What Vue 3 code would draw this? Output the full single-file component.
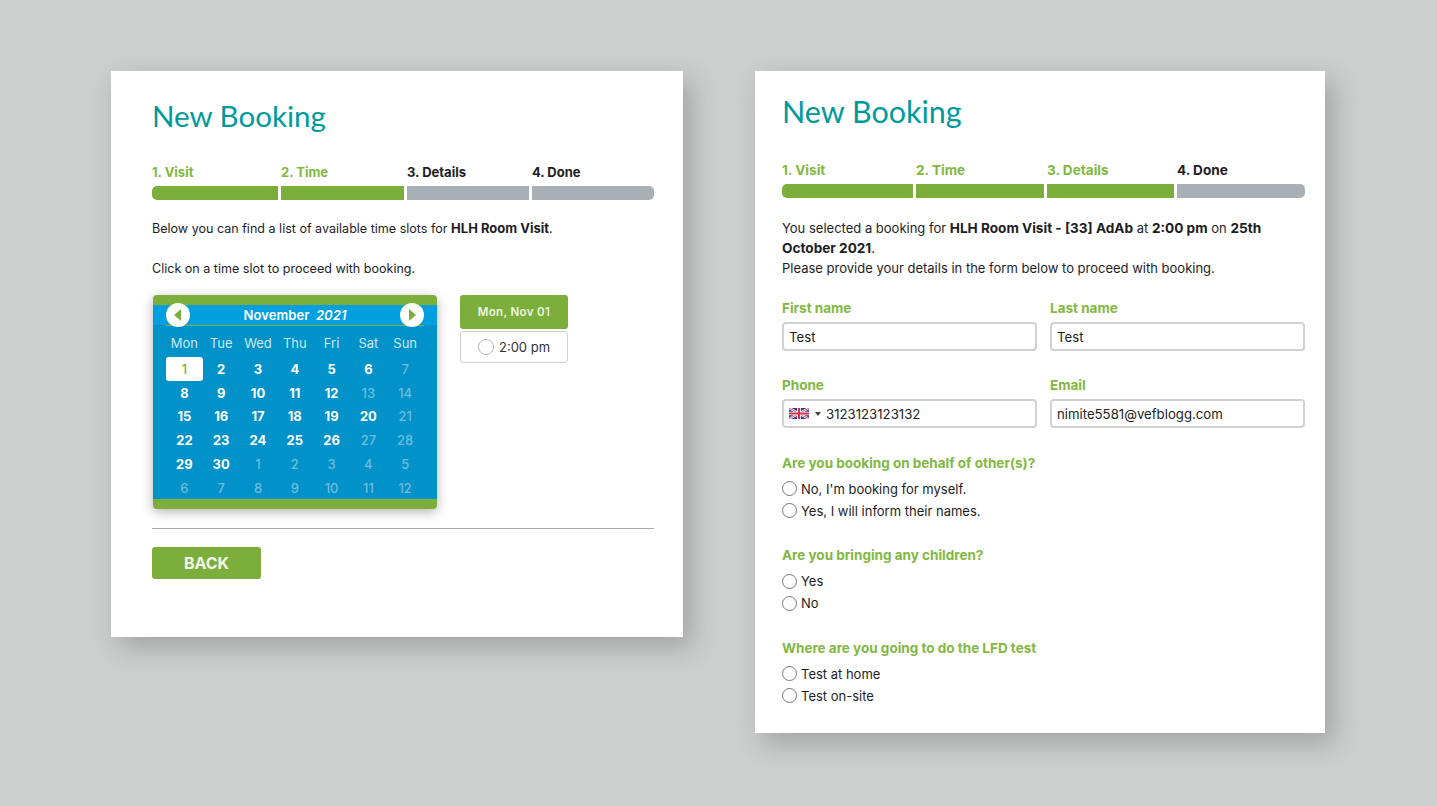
<script setup>
const weekdays = ['Mon', 'Tue', 'Wed', 'Thu', 'Fri', 'Sat', 'Sun']
const cells = [
  [1, 'sel'], [2, 'on'], [3, 'on'], [4, 'on'], [5, 'on'], [6, 'on'], [7, 'off'],
  [8, 'on'], [9, 'on'], [10, 'on'], [11, 'on'], [12, 'on'], [13, 'off'], [14, 'off'],
  [15, 'on'], [16, 'on'], [17, 'on'], [18, 'on'], [19, 'on'], [20, 'on'], [21, 'off'],
  [22, 'on'], [23, 'on'], [24, 'on'], [25, 'on'], [26, 'on'], [27, 'off'], [28, 'off'],
  [29, 'on'], [30, 'on'], [1, 'off'], [2, 'off'], [3, 'off'], [4, 'off'], [5, 'off'],
  [6, 'off'], [7, 'off'], [8, 'off'], [9, 'off'], [10, 'off'], [11, 'off'], [12, 'off']
]
const leftSteps = [['1. Visit', true], ['2. Time', true], ['3. Details', false], ['4. Done', false]]
const rightSteps = [['1. Visit', true], ['2. Time', true], ['3. Details', true], ['4. Done', false]]
const groups = [
  ["Are you booking on behalf of other(s)?", ["No, I'm booking for myself.", 'Yes, I will inform their names.']],
  ['Are you bringing any children?', ['Yes', 'No']],
  ['Where are you going to do the LFD test', ['Test at home', 'Test on-site']]
]
</script>

<template>
  <div class="page">
    <section class="card card-left">
      <h1 class="title">New Booking</h1>
      <div class="steps steps-left">
        <div v-for="s in leftSteps" :key="s[0]" class="step" :class="{ done: s[1] }">
          <span class="step-label">{{ s[0] }}</span>
          <span class="step-bar"></span>
        </div>
      </div>
      <p class="intro">Below you can find a list of available time slots for <b>HLH Room Visit</b>.</p>
      <p class="intro second">Click on a time slot to proceed with booking.</p>
      <div class="picker">
        <div class="calendar">
          <div class="cal-head">
            <span class="nav"><svg width="8" height="12" viewBox="0 0 8 12"><path d="M7 0v12L0 6z" fill="#7cae3b"/></svg></span>
            <span class="month">November <i>2021</i></span>
            <span class="nav"><svg width="8" height="12" viewBox="0 0 8 12"><path d="M1 0v12l7-6z" fill="#7cae3b"/></svg></span>
          </div>
          <div class="cal-grid">
            <span v-for="d in weekdays" :key="d" class="wd">{{ d }}</span>
            <span v-for="(c, i) in cells" :key="i" class="day" :class="c[1]">{{ c[0] }}</span>
          </div>
        </div>
        <div class="slots">
          <div class="slot-day">Mon, Nov 01</div>
          <div class="slot"><span class="radio slot-radio"></span>2:00 pm</div>
        </div>
      </div>
      <hr class="rule" />
      <button class="back">BACK</button>
    </section>

    <section class="card card-right">
      <h1 class="title title-right">New Booking</h1>
      <div class="steps steps-right">
        <div v-for="s in rightSteps" :key="s[0]" class="step" :class="{ done: s[1] }">
          <span class="step-label">{{ s[0] }}</span>
          <span class="step-bar"></span>
        </div>
      </div>
      <p class="summary">You selected a booking for <b>HLH Room Visit - [33] AdAb</b> at <b>2:00 pm</b> on <b>25th October 2021</b>.<br />Please provide your details in the form below to proceed with booking.</p>
      <div class="fields">
        <label class="field"><span class="q">First name</span><span class="input">Test</span></label>
        <label class="field"><span class="q">Last name</span><span class="input">Test</span></label>
        <label class="field"><span class="q">Phone</span>
          <span class="input">
            <svg class="flag" width="20" height="11" viewBox="0 0 60 33">
              <rect width="60" height="33" fill="#2a3f8f"/>
              <path d="M0 0l60 33M60 0L0 33" stroke="#fff" stroke-width="7"/>
              <path d="M0 0l60 33M60 0L0 33" stroke="#d8304a" stroke-width="2.5"/>
              <path d="M30 0v33M0 16.500h60" stroke="#fff" stroke-width="11"/>
              <path d="M30 0v33M0 16.500h60" stroke="#d8304a" stroke-width="6"/>
            </svg>
            <span class="caret"></span>3123123123132
          </span>
        </label>
        <label class="field"><span class="q">Email</span><span class="input">nimite5581@vefblogg.com</span></label>
      </div>
      <div v-for="g in groups" :key="g[0]" class="group">
        <div class="q">{{ g[0] }}</div>
        <div v-for="o in g[1]" :key="o" class="option"><span class="radio"></span>{{ o }}</div>
      </div>
    </section>
  </div>
</template>

<style>
html, body { margin: 0; background: #cdcfce; }
</style>

<style scoped>
.page {
  display: flex;
  align-items: flex-start;
  gap: 72px;
  box-sizing: border-box;
  width: 1437px;
  height: 806px;
  padding: 71px 0 0 111px;
  overflow: hidden;
  font-family: Inter, "Liberation Sans", sans-serif;
  font-size: 13px;
  color: #1d1d1f;
}
.card {
  box-sizing: border-box;
  background: #fff;
  box-shadow: 8px 10px 24px rgba(60, 60, 60, .3);
}
.card-left { width: 572px; height: 566px; padding: 25px 29px 0 41px; }
.card-right { width: 570px; height: 662px; padding: 20px 20px 0 27px; }
.title {
  margin: 0;
  font-family: Lato, sans-serif;
  font-weight: 400;
  font-size: 29.500px;
  line-height: 40px;
  color: #009a9d;
}
.title-right { font-size: 30.500px; }
.steps { display: grid; column-gap: 3px; }
.steps-left { grid-template-columns: 126px 123px 122px 122px; margin-top: 27px; }
.steps-right { grid-template-columns: 131px 128px 127px 128px; margin-top: 30px; }
.step { display: flex; flex-direction: column; }
.step-label { height: 23px; font-weight: 700; line-height: 18px; font-size: 13px; color: #1d1d1f; }
.steps-right .step-label { font-size: 13.600px; }
.step.done .step-label { color: #82b842; }
.step-bar { height: 14px; background: #a9b0b5; }
.step.done .step-bar { background: #7cae3b; }
.step:first-child .step-bar { border-radius: 5px 0 0 5px; }
.step:last-child .step-bar { border-radius: 0 5px 5px 0; }
.intro { margin: 18px 0 0; line-height: 20px; font-size: 12.550px; }
.intro b { font-size: 13px; }
.intro.second { margin-top: 20px; }
.picker { display: flex; align-items: flex-start; gap: 23px; margin-top: 16px; }
.calendar {
  box-sizing: border-box;
  width: 284px;
  height: 214px;
  margin-left: 1px;
  padding: 0 13px;
  border-top: 10px solid #7cae3b;
  border-bottom: 10px solid #7cae3b;
  border-radius: 4px;
  background: #0092c9;
  box-shadow: 0 3px 12px rgba(0, 0, 0, .3);
}
.cal-head {
  position: relative;
  display: flex;
  align-items: center;
  justify-content: space-between;
  height: 20px;
  margin: 0 -13px;
  padding: 0 13px;
  background: #00a0e0;
}
.cal-head::after {
  content: "";
  position: absolute;
  left: 13px;
  right: 13px;
  bottom: -1px;
  height: 1px;
  background: #7cae3b;
}
.nav {
  z-index: 1;
  display: flex;
  align-items: center;
  justify-content: center;
  width: 24px;
  height: 24px;
  border-radius: 50%;
  background: #fff;
}
.month { color: #fff; font-weight: 600; font-size: 13px; letter-spacing: .1px; }
.month i { margin-left: 3px; }
.cal-grid {
  display: grid;
  grid-template-columns: repeat(7, 36.800px);
  grid-template-rows: 26px;
  grid-auto-rows: 23.800px;
  margin-top: 6px;
  align-items: center;
  justify-items: center;
}
.wd { align-self: start; color: #cfe9f5; font-size: 13px; height: 24px; line-height: 24px; }
.day { color: #fff; font-weight: 700; font-size: 13px; }
.day.off { color: #6fbcdc; font-weight: 500; }
.day.sel {
  display: flex;
  align-items: center;
  justify-content: center;
  width: 37px;
  height: 24px;
  border-radius: 3px;
  background: #fff;
  color: #7cae3b;
  font-weight: 500;
}
.slots { display: flex; flex-direction: column; gap: 2px; width: 108px; }
.slot-day {
  height: 34px;
  line-height: 34px;
  border-radius: 3px;
  background: #7cae3b;
  color: #eef5e2;
  text-align: center;
  font-weight: 600;
  font-size: 11.500px;
  letter-spacing: .35px;
}
.slot {
  box-sizing: border-box;
  display: flex;
  align-items: center;
  justify-content: center;
  height: 32px;
  border: 1.500px solid #cfd1d1;
  border-radius: 3px;
  gap: 5px;
  color: #333;
}
.radio {
  flex: none;
  box-sizing: border-box;
  width: 15px;
  height: 15px;
  border: 1.500px solid #777;
  border-radius: 50%;
  background: #fff;
}
.slot-radio { width: 16px; height: 16px; border-color: #b5b8b8; }
.rule { margin: 19px 0 0; border: 0; border-top: 1px solid #aaa; }
.back {
  display: block;
  width: 109px;
  height: 32px;
  margin-top: 18px;
  border: 0;
  border-radius: 3px;
  background: #7cae3b;
  color: #f4f8ec;
  font-family: inherit;
  font-weight: 700;
  font-size: 16px;
}
.summary { margin: 20px 0 0; line-height: 20px; }
.summary b { font-size: 13.600px; }
.fields {
  display: grid;
  grid-template-columns: 255px 255px;
  column-gap: 13px;
  row-gap: 24px;
  margin-top: 20px;
  padding-bottom: 1px;
}
.field { display: flex; flex-direction: column; }
.q { font-weight: 700; font-size: 13.500px; color: #82b842; line-height: 20px; }
.field .q { margin-bottom: 4px; }
.input {
  box-sizing: border-box;
  display: flex;
  align-items: center;
  height: 29px;
  padding: 0 5px;
  border: 2px solid #d0d2d2;
  border-radius: 4px;
  background: #fff;
  color: #222;
  font-size: 13.200px;
}
.flag { margin-right: 6px; }
.caret {
  width: 0;
  height: 0;
  margin-right: 5px;
  border-left: 3px solid transparent;
  border-right: 3px solid transparent;
  border-top: 4px solid #444;
}
.group { margin-top: 23.500px; }
.group .q { margin-bottom: 5px; }
.option { display: flex; align-items: center; gap: 4px; height: 22px; }
</style>
